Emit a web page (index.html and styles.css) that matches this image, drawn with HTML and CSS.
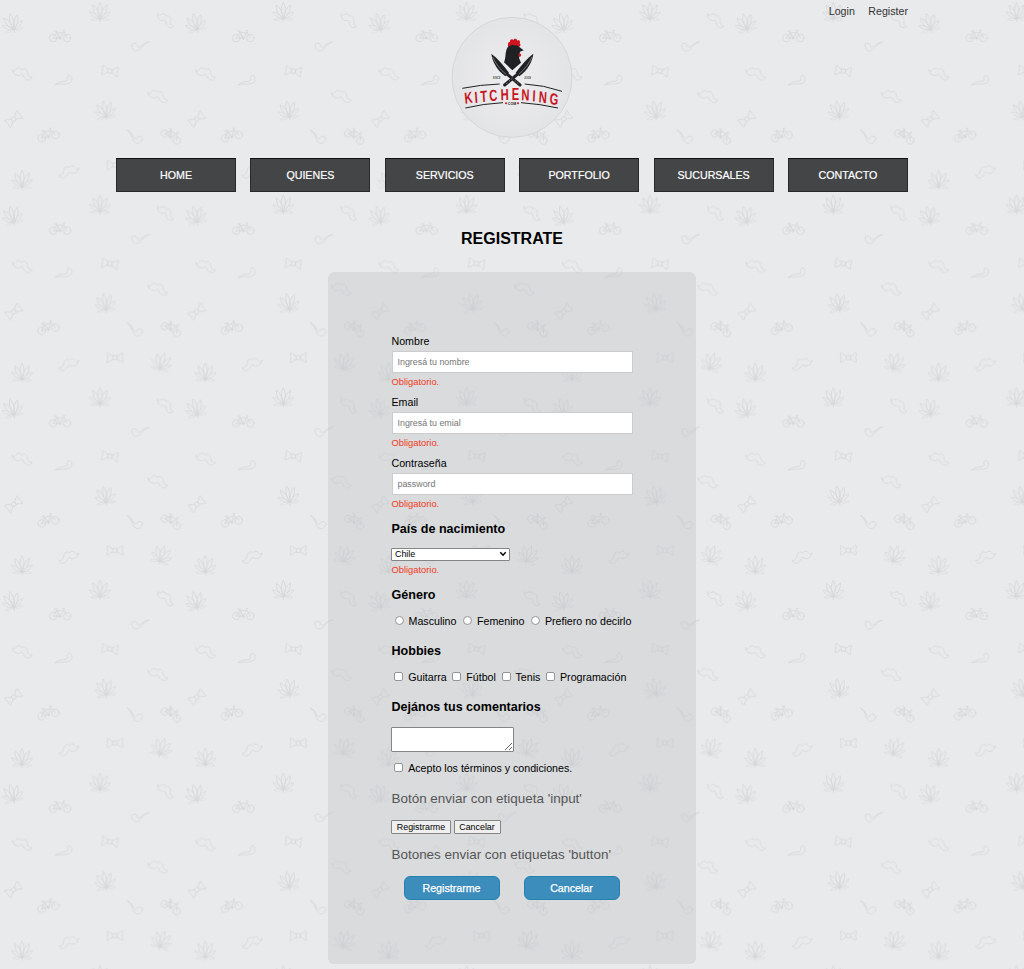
FILE: index.html
```html
<!DOCTYPE html>
<html lang="es">
<head>
<meta charset="utf-8">
<title>Kitchening - Registrate</title>
<link rel="stylesheet" href="styles.css">
</head>
<body>
<svg class="backdrop" aria-hidden="true">
  <defs>
    <path id="lobe" d="M0 0C-8-16-8-34 0-48C8-34 8-16 0 0Z"/>
    <g id="leaf">
      <path d="M0 18V28"/>
      <use href="#lobe" transform="translate(0 18)"/>
      <use href="#lobe" transform="translate(-1 18) rotate(-27) scale(.93)"/>
      <use href="#lobe" transform="translate(1 18) rotate(27) scale(.93)"/>
      <use href="#lobe" transform="translate(-2 19) rotate(-56) scale(.75)"/>
      <use href="#lobe" transform="translate(2 19) rotate(56) scale(.75)"/>
      <use href="#lobe" transform="translate(-2 20) rotate(-94) scale(.55)"/>
      <use href="#lobe" transform="translate(2 20) rotate(94) scale(.55)"/>
    </g>
    <g id="bike">
      <circle cx="-21" cy="7" r="11"/><circle cx="21" cy="7" r="11"/>
      <path d="M-21 7L-10-9H10L0 8L-12-13M-21 7H0M21 7L9-16H14M-17-14H-8M-10-9L0 8"/><circle cx="0" cy="8" r="3"/>
    </g>
    <path id="stache" d="M-29-11C-27-4-22-8-18-13C-13-19-5-18-1-12C4-18 13-15 15-7C17 2 20 13 30 10C29 19 18 21 11 16C4 11 6 3-2 1C-6 8-27 7-29-11Z"/>
    <path id="pipe" d="M27-13C15-13 10-5 1 1C-5 5-9 2-8-4C-10-10-22-10-25-6C-25 6-20 15-11 14C4 13 7-8 27-13Z"/>
    <path id="pipe-low" d="M-26 13C-16 5-6 3 3 3C11 2 14-2 11-6C9-12 14-15 18-15C24-13 27-4 22 4C16 14 0 8-26 13Z"/>
    <g id="bow">
      <path d="M-6-5C-13-5-17-14-23-14C-26-9-22-6-22 0C-22 6-26 9-23 14C-17 14-13 5-6 5M6-5C13-5 17-14 23-14C26-9 22-6 22 0C22 6 26 9 23 14C17 14 13 5 6 5"/><circle r="7"/>
    </g>
    <pattern id="doodles" width="550" height="578" patternUnits="userSpaceOnUse" patternTransform="scale(.33333)">
      <g class="doodle">
        <use href="#leaf" transform="translate(37 70) rotate(-14)"/>
        <use href="#leaf" transform="translate(300 37)"/>
        <use href="#stache" transform="translate(496 60) rotate(18) scale(.95)"/>
        <use href="#bike" transform="translate(180 107)"/>
        <use href="#pipe" transform="translate(420 139)"/>
        <use href="#stache" transform="translate(66 221)"/>
        <use href="#pipe-low" transform="translate(191 241)"/>
        <use href="#bow" transform="translate(330 213) rotate(8)"/>
        <use href="#stache" transform="translate(473 289)"/>
        <use href="#leaf" transform="translate(315 332) rotate(-10)"/>
        <use href="#bow" transform="translate(41 357) rotate(-38)"/>
        <use href="#bike" transform="translate(144 403) rotate(-13)"/>
        <use href="#pipe" transform="translate(403 412) rotate(20) scale(-1 1)"/>
        <use href="#bike" transform="translate(516 405) rotate(30)"/>
        <use href="#leaf" transform="translate(66 541)"/>
        <use href="#stache" transform="translate(207 515) scale(-1 1)"/>
        <use href="#bow" transform="translate(345 495)"/>
        <use href="#leaf" transform="translate(485 510) rotate(17)"/>
      </g>
    </pattern>
  </defs>
  <rect width="100%" height="100%" fill="url(#doodles)"/>
</svg>

<header class="header">
  <div class="account"><a href="#">Login</a><a href="#">Register</a></div>
  <svg class="logo" viewBox="0 0 435 405" role="img" aria-label="Kitchening.com">
    <defs>
      <radialGradient id="disc"><stop offset="0" stop-color="#ededef"/><stop offset="1" stop-color="#e3e4e6"/></radialGradient>
      <g id="knife">
        <path fill="#202124" d="M154 131C157 155 170 179 196 199L207 188C191 166 174 146 154 131Z"/>
        <path fill="none" stroke="#c8c9cb" stroke-width="1.5" d="M158 141C166 160 180 178 198 193"/>
        <path stroke="#202124" stroke-width="9" stroke-linecap="round" d="M202 193L240 225"/>
        <path stroke="#e9eaec" stroke-width="2" stroke-linecap="round" stroke-dasharray="1 9" d="M218 206L240 225"/>
      </g>
    </defs>
    <circle cx="216" cy="202" r="180" fill="url(#disc)" stroke="#cdced0" stroke-width="2"/>
    <path fill="#d0141f" d="M205 113C202 102 205 94 210 97C208 87 218 86 220 91C223 84 232 86 231 92C238 89 242 93 239 101C244 103 241 109 237 111L220 105Z"/>
    <path fill="#202124" d="M192 157C199 143 194 126 203 112C211 103 231 103 239 112L251 121L240 125C238 132 236 139 238 146L243 158L217 181Z"/>
    <path fill="#d0141f" d="M237 130C244 130 246 137 239 141C234 139 234 133 237 130Z"/>
    <use href="#knife"/>
    <use href="#knife" transform="translate(434 0) scale(-1 1)"/>
    <g fill="none" stroke="#202124" stroke-width="3">
      <path d="M67 235Q121 224 179 222M254 222Q311 225 366 244M76 294Q130 281 189 278M243 278Q301 282 354 294"/>
    </g>
    <g class="logo-word" transform="scale(.7 1)">
      <text x="124 157 189 230 278 323 366 402 440 487" y="282 279 277 274 271 270 271 274 277 281" rotate="-8 -6 -5 -4 -2 0 2 4 5 7" text-anchor="middle">KITCHENING</text>
    </g>
    <g class="logo-small" text-anchor="middle">
      <text x="170" y="206" textLength="23" lengthAdjust="spacingAndGlyphs">SINCE</text>
      <text x="263" y="206" textLength="20" lengthAdjust="spacingAndGlyphs">2009</text>
      <text class="logo-com" x="216" y="285" textLength="25" lengthAdjust="spacingAndGlyphs">COM</text>
    </g>
    <circle cx="198" cy="280" r="3" fill="#d0141f"/><circle cx="234" cy="280" r="3" fill="#d0141f"/>
  </svg>
  <nav class="nav">
    <a href="#">HOME</a><a href="#">QUIENES</a><a href="#">SERVICIOS</a><a href="#">PORTFOLIO</a><a href="#">SUCURSALES</a><a href="#">CONTACTO</a>
  </nav>
</header>

<main>
  <h2 class="title">REGISTRATE</h2>
  <form class="form">
    <div class="field">
      <label for="nombre">Nombre</label>
      <input class="text" id="nombre" type="text" placeholder="Ingresá tu nombre">
      <span class="error">Obligatorio.</span>
    </div>
    <div class="field">
      <label for="email">Email</label>
      <input class="text" id="email" type="text" placeholder="Ingresá tu emial">
      <span class="error">Obligatorio.</span>
    </div>
    <div class="field">
      <label for="clave">Contraseña</label>
      <input class="text" id="clave" type="password" placeholder="password">
      <span class="error">Obligatorio.</span>
    </div>

    <h3 class="first">País de nacimiento</h3>
    <div class="select">
      <span>Chile</span>
      <svg viewBox="0 0 8 6"><path d="M1.3 1.3L4 4.2L6.7 1.3" fill="none" stroke="#000" stroke-width="1.5"/></svg>
    </div>
    <span class="error country-error">Obligatorio.</span>

    <h3>Género</h3>
    <div class="options radios">
      <label><input type="radio" name="genero">Masculino</label>
      <label><input type="radio" name="genero">Femenino</label>
      <label><input type="radio" name="genero">Prefiero no decirlo</label>
    </div>

    <h3>Hobbies</h3>
    <div class="options">
      <label><input type="checkbox">Guitarra</label>
      <label><input type="checkbox">Fútbol</label>
      <label><input type="checkbox">Tenis</label>
      <label><input type="checkbox">Programación</label>
    </div>

    <h3>Dejános tus comentarios</h3>
    <textarea class="comments"></textarea>
    <div class="options terms">
      <label><input type="checkbox">Acepto los términos y condiciones.</label>
    </div>

    <p class="note">Botón enviar con etiqueta 'input'</p>
    <div class="plain-buttons">
      <input class="register" type="button" value="Registrarme">
      <input class="cancel" type="button" value="Cancelar">
    </div>
    <p class="note second">Botones enviar con etiquetas 'button'</p>
    <div class="blue-buttons">
      <button type="button">Registrarme</button>
      <button type="button">Cancelar</button>
    </div>
  </form>
</main>
</body>
</html>
```

FILE: styles.css
```css
* { box-sizing: border-box; }
body {
  position: relative;
  margin: 0;
  height: 969px;
  overflow: hidden;
  background: #e9eaec;
  color: #000;
  font: 10.67px/12px "Liberation Sans", Arial, sans-serif;
}
.backdrop {
  position: absolute;
  inset: 0;
  z-index: -1;
  width: 100%;
  height: 100%;
}
.doodle {
  fill: none;
  stroke: #d6d7d9;
  stroke-width: 2.6;
  stroke-linecap: round;
  stroke-linejoin: round;
}
.header {
  display: flex;
  flex-direction: column;
  align-items: center;
  width: 792px;
  margin: 0 auto;
}
.account {
  display: flex;
  align-self: flex-end;
  gap: 13.5px;
  height: 10px;
  padding-top: 5px;
}
.account a { color: #333; text-decoration: none; }
.logo { width: 145px; height: 135px; display: block; }
.logo-word text {
  font: bold 48px "Liberation Sans", Arial, sans-serif;
  fill: #c8141e;
}
.logo-small text {
  font: bold 9px "Liberation Sans", Arial, sans-serif;
  fill: #555;
}
.logo-small .logo-com { font-size: 13px; fill: #202124; }
.nav {
  display: flex;
  justify-content: space-between;
  width: 792px;
  margin-top: 13px;
}
.nav a {
  width: 120px;
  height: 34px;
  border: 1px solid #29292b;
  border-top-color: #111;
  background: #444547;
  color: #fff;
  line-height: 32px;
  text-align: center;
  text-decoration: none;
  -webkit-text-stroke: .2px #fff;
}
.title {
  margin: 37px 0 23px;
  font-size: 16px;
  line-height: 20px;
  text-align: center;
}
.form {
  display: flex;
  flex-direction: column;
  align-items: flex-start;
  width: 368px;
  height: 692px;
  margin: 0 auto;
  padding: 62.5px 63.5px 0;
  border-radius: 6px;
  background: rgba(193, 194, 196, .38);
}
.field {
  display: flex;
  flex-direction: column;
  width: 100%;
  height: 61px;
}
.text {
  height: 22px;
  margin: 4px 0 3px;
  padding: 0 5px;
  border: 1px solid #ccc;
  background: #fff;
  font: 8.89px "Liberation Sans", Arial, sans-serif;
}
.text::placeholder { color: #757575; }
.error { color: #f4391c; font-size: 9.33px; }
h3 {
  margin: 11px 0 12px;
  font-size: 12.55px;
  line-height: 16px;
}
h3.first { margin-top: 3px; margin-bottom: 11px; }
.select {
  display: flex;
  align-items: center;
  justify-content: space-between;
  width: 118.5px;
  height: 13px;
  margin-left: -.5px;
  padding: 0 2px 0 3px;
  border: 1px solid #858585;
  border-radius: 1px;
  background: #fff;
  font-size: 8.89px;
  line-height: 11px;
}
.select svg { width: 8px; height: 6px; }
.country-error { margin-top: 3px; }
.options {
  display: flex;
  gap: 5.6px;
  height: 14px;
  margin: -1px 0 4px;
  line-height: 14px;
  white-space: nowrap;
}
.options label { display: flex; align-items: center; }
.options input {
  appearance: none;
  flex: none;
  width: 9px;
  height: 9px;
  margin: 0 5px 0 0;
  border: 1px solid #959595;
  border-radius: 2px;
  background: #fff;
}
.options label:first-child input { margin-left: 2.7px; }
.options.radios { gap: 6.5px; }
.options.radios input { border-radius: 50%; }
.options.radios label:first-child input { margin-left: 3px; }
.comments {
  width: 122.5px;
  height: 25px;
  margin-left: -.5px;
  border: 1px solid #858585;
  border-radius: 1px;
}
.options.terms { margin: 9px 0 0; }
.note {
  margin: 16px 0 13px;
  color: #555;
  font-size: 13.45px;
  line-height: 16px;
}
.plain-buttons { display: flex; gap: 2.5px; margin-left: -.5px; }
.plain-buttons input {
  height: 14px;
  padding: 0;
  border: 1px solid #858585;
  border-radius: 1px;
  background: #efefef;
  font: 8.89px "Liberation Sans", Arial, sans-serif;
}
.register { width: 60px; }
.cancel { width: 47px; }
.note.second { margin: 13px 0; }
.blue-buttons {
  display: flex;
  gap: 24px;
  padding-left: 12px;
}
.blue-buttons button {
  width: 96px;
  height: 24.5px;
  padding: 0;
  border: 1px solid #2681b3;
  border-radius: 6px;
  background: #3c8dbc;
  color: #fff;
  font: 10.67px "Liberation Sans", Arial, sans-serif;
  -webkit-text-stroke: .25px #fff;
}
```
